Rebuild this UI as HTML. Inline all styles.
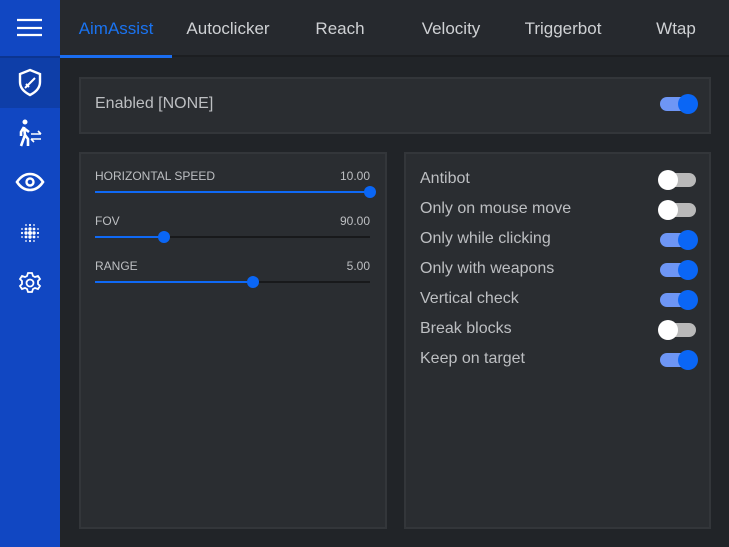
<!DOCTYPE html>
<html><head><style>
*{margin:0;padding:0;box-sizing:border-box}
body{width:729px;height:547px;background:#212428;font-family:"Liberation Sans",sans-serif;position:relative;overflow:hidden}
.side{position:absolute;left:0;top:0;width:60px;height:547px;background:#1147c2}
.hdr{position:absolute;left:60px;top:0;width:669px;height:57px;background:#26292e;border-bottom:2px solid #1c1e21}
.tab{position:absolute;top:0;height:55px;width:112px;text-align:center;line-height:57px;font-size:17px;color:#cfd1d4}
.tab.on{color:#1a73f0;border-bottom:3px solid #1a6df0;height:58px}
.panel{position:absolute;background:#2a2d31;border:2px solid #33363a}
.sw{position:absolute;width:36px;height:14px;border-radius:7px}
.sw i{position:absolute;top:-3px;width:20px;height:20px;border-radius:50%}
.sw.on{background:#6e96f5}.sw.on i{left:18px;background:#0a66f5}
.sw.off{background:#b9b9b9}.sw.off i{left:-2px;background:#fff}
.lbl{position:absolute;color:#bdbfc2;font-size:16px}
.sl{position:absolute;left:95px;width:275px}
.sl .t{font-size:12px;color:#bdbfc2;display:flex;justify-content:space-between}
.sl .tr{position:relative;height:2px;background:#18191b;margin-top:8px}
.sl .f{position:absolute;left:0;top:0;height:2px;background:#0f69f5}
.sl .k{position:absolute;top:-5px;width:12px;height:12px;margin-left:-6px;border-radius:50%;background:#0a66f5}
</style></head><body>
<div class="side">
 <div style="position:absolute;left:0;top:56px;width:60px;height:2px;background:#0c3591"></div>
 <div style="position:absolute;left:0;top:58px;width:60px;height:50px;background:#0e3ea8"></div>
 <svg width="60" height="300" style="position:absolute;left:0;top:0" fill="none" stroke="#fff" stroke-width="2.2">
  <path d="M17 20h25M17 28h25M17 35h25"/>
  <path d="M30 70l10 4v8c0 6-4 10-10 13-6-3-10-7-10-13v-8z" stroke-width="2.4"/>
  <path d="M25 88l9-9M34 79l1-1M26 84l3 3" stroke-width="2"/>
  <circle cx="25" cy="122" r="2.5" fill="#fff" stroke="none"/>
  <path d="M24 127l-3 5v4M24 127l1 8-4 11M25 135l3 4v7M25 129l4 3" stroke-width="2.6"/>
  <path d="M31 134h10M38 131l3 3M31 139h10M34 142l-3-3" stroke-width="1.6"/>
  <path d="M17 182c4-6 9-8 13-8s9 2 13 8c-4 6-9 8-13 8s-9-2-13-8z" stroke-width="2.6"/>
  <circle cx="30" cy="182" r="3.5" stroke-width="2.4"/>
  <g fill="#fff" stroke="none">
   <circle cx="30" cy="233" r="2"/><circle cx="26" cy="233" r="1.7"/><circle cx="34" cy="233" r="1.7"/><circle cx="30" cy="229" r="1.7"/><circle cx="30" cy="237" r="1.7"/>
   <circle cx="26" cy="229" r="1.4"/><circle cx="34" cy="229" r="1.4"/><circle cx="26" cy="237" r="1.4"/><circle cx="34" cy="237" r="1.4"/>
   <circle cx="22" cy="233" r="1.1"/><circle cx="38" cy="233" r="1.1"/><circle cx="30" cy="225" r="1.1"/><circle cx="30" cy="241" r="1.1"/>
   <circle cx="22" cy="229" r=".9"/><circle cx="38" cy="229" r=".9"/><circle cx="22" cy="237" r=".9"/><circle cx="38" cy="237" r=".9"/>
   <circle cx="26" cy="225" r=".9"/><circle cx="34" cy="225" r=".9"/><circle cx="26" cy="241" r=".9"/><circle cx="34" cy="241" r=".9"/>
  </g>
  <path d="M28 273h4l1 3 2 1 3-1 2 3-2 2v3l2 2-2 3-3-1-2 1-1 3h-4l-1-3-2-1-3 1-2-3 2-2v-3l-2-2 2-3 3 1 2-1z" stroke-width="1.8"/>
  <circle cx="30" cy="283" r="3.5" stroke-width="1.8"/>
 </svg>
</div>
<div class="hdr">
 <div class="tab on" style="left:0">AimAssist</div>
 <div class="tab" style="left:112px">Autoclicker</div>
 <div class="tab" style="left:224px">Reach</div>
 <div class="tab" style="left:335px">Velocity</div>
 <div class="tab" style="left:447px">Triggerbot</div>
 <div class="tab" style="left:560px">Wtap</div>
</div>
<div class="panel" style="left:79px;top:77px;width:632px;height:57px"></div>
<div class="lbl" style="left:95px;top:95px">Enabled [NONE]</div>
<div class="sw on" style="left:660px;top:97px"><i></i></div>
<div class="panel" style="left:79px;top:152px;width:308px;height:377px"></div>
<div class="panel" style="left:404px;top:152px;width:307px;height:377px"></div>
<div class="sl" style="top:169px"><div class="t"><span>HORIZONTAL SPEED</span><span>10.00</span></div><div class="tr"><div class="f" style="width:275px"></div><div class="k" style="left:275px"></div></div></div>
<div class="sl" style="top:214px"><div class="t"><span>FOV</span><span>90.00</span></div><div class="tr"><div class="f" style="width:69px"></div><div class="k" style="left:69px"></div></div></div>
<div class="sl" style="top:259px"><div class="t"><span>RANGE</span><span>5.00</span></div><div class="tr"><div class="f" style="width:158px"></div><div class="k" style="left:158px"></div></div></div>
<div class="lbl" style="left:420px;top:170px">Antibot</div><div class="sw off" style="left:660px;top:173px"><i></i></div>
<div class="lbl" style="left:420px;top:200px">Only on mouse move</div><div class="sw off" style="left:660px;top:203px"><i></i></div>
<div class="lbl" style="left:420px;top:230px">Only while clicking</div><div class="sw on" style="left:660px;top:233px"><i></i></div>
<div class="lbl" style="left:420px;top:260px">Only with weapons</div><div class="sw on" style="left:660px;top:263px"><i></i></div>
<div class="lbl" style="left:420px;top:290px">Vertical check</div><div class="sw on" style="left:660px;top:293px"><i></i></div>
<div class="lbl" style="left:420px;top:320px">Break blocks</div><div class="sw off" style="left:660px;top:323px"><i></i></div>
<div class="lbl" style="left:420px;top:350px">Keep on target</div><div class="sw on" style="left:660px;top:353px"><i></i></div>
</body></html>
